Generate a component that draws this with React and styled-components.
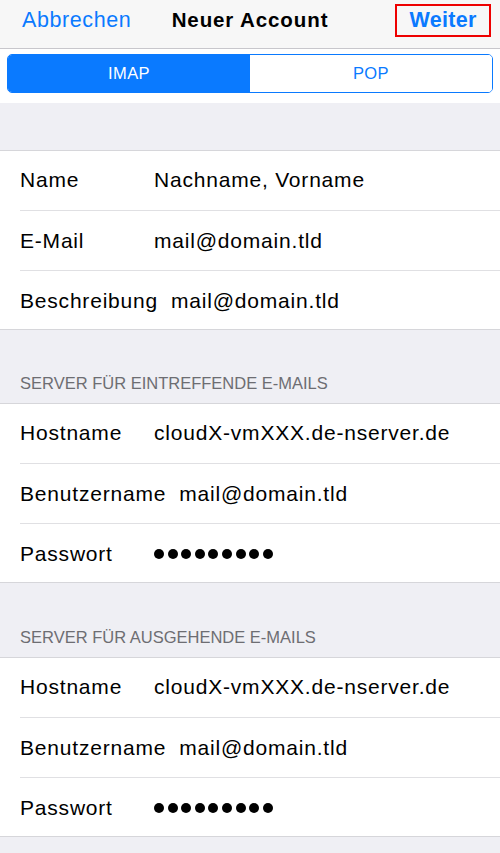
import React from 'react';
import styled, { createGlobalStyle } from 'styled-components';

const GlobalStyle = createGlobalStyle`
  html, body {
    margin: 0;
    padding: 0;
    background: #efeff4;
  }
  body {
    font-family: "Liberation Sans", Arial, sans-serif;
    -webkit-font-smoothing: antialiased;
  }
`;

const Screen = styled.div`
  width: 500px;
  min-height: 853px;
  background: #efeff4;
  color: #000;
`;

const NavBar = styled.header`
  height: 49px;
  box-sizing: border-box;
  padding-bottom: 8px;
  display: grid;
  grid-template-columns: 1fr auto 1fr;
  align-items: center;
  background: #f7f7f7;
  border-bottom: 1px solid #c8c7cc;
`;

const NavButton = styled.button`
  border: none;
  background: none;
  padding: 0;
  font: inherit;
  font-size: 21.5px;
  font-weight: ${p => (p.$strong ? 600 : 400)};
  letter-spacing: ${p => (p.$strong ? '0.3px' : '0.6px')};
  color: #0a7aff;
  cursor: pointer;
`;

const LeftSlot = styled.div`
  display: flex;
  justify-content: flex-start;
  padding-left: 22px;
`;

const RightSlot = styled.div`
  display: flex;
  justify-content: flex-end;
  padding-right: 9px;
`;

const Highlight = styled.div`
  box-sizing: border-box;
  width: 96px;
  height: 33px;
  border: 2px solid #ee0000;
  display: flex;
  align-items: center;
  justify-content: center;
`;

const Title = styled.h1`
  margin: 0;
  font-size: 20.5px;
  font-weight: 700;
  letter-spacing: 0.9px;
`;

const SegmentBar = styled.div`
  background: #fff;
  padding: 5px 7px 10px;
`;

const Segmented = styled.div`
  display: grid;
  grid-template-columns: 1fr 1fr;
  height: 39px;
  box-sizing: border-box;
  border: 1.5px solid #0a7aff;
  border-radius: 5px;
  overflow: hidden;
`;

const Segment = styled.button`
  border: none;
  margin: 0;
  font: inherit;
  font-size: 16.5px;
  letter-spacing: 0.4px;
  background: ${p => (p.$active ? '#0a7aff' : '#fff')};
  color: ${p => (p.$active ? '#fff' : '#0a7aff')};
`;

const Spacer = styled.div`
  height: 47px;
`;

const SectionHeader = styled.div`
  height: ${p => p.$height || 73}px;
  box-sizing: border-box;
  display: flex;
  align-items: flex-end;
  padding: 0 20px 10px;
  font-size: 16.5px;
  line-height: 20px;
  color: #6d6d72;
  text-transform: uppercase;
`;

/* hairlines drawn inside the box so the group stays 3 × 60px tall */
const Group = styled.div`
  background: #fff;
  box-shadow: inset 0 1px 0 #d6d6da, inset 0 -1px 0 #d6d6da;
`;

const Row = styled.div`
  height: 60px;
  box-sizing: border-box;
  margin-left: 20px;
  display: flex;
  align-items: center;
  font-size: 21px;
  letter-spacing: 0.8px;
  & + & {
    border-top: 1px solid #e0e0e3;
  }
`;

const Label = styled.span`
  min-width: 121px;
  margin-right: 13px;
  white-space: nowrap;
`;

const Value = styled.span`
  white-space: nowrap;
`;

const Dots = styled.span`
  display: flex;
  gap: 3.6px;
`;

const Dot = styled.i`
  width: 10px;
  height: 10px;
  border-radius: 50%;
  background: #000;
`;

const Masked = ({ length }) => (
  <Dots aria-label="Passwort">
    {Array.from({ length }, (_, i) => <Dot key={i} />)}
  </Dots>
);

const account = [
  { label: 'Name', value: 'Nachname, Vorname' },
  { label: 'E-Mail', value: 'mail@domain.tld' },
  { label: 'Beschreibung', value: 'mail@domain.tld' },
];

const server = [
  { label: 'Hostname', value: 'cloudX-vmXXX.de-nserver.de' },
  { label: 'Benutzername', value: 'mail@domain.tld' },
  { label: 'Passwort', secret: 9 },
];

const Fields = ({ rows }) => (
  <Group>
    {rows.map(r => (
      <Row key={r.label}>
        <Label>{r.label}</Label>
        {r.secret ? <Masked length={r.secret} /> : <Value>{r.value}</Value>}
      </Row>
    ))}
  </Group>
);

export default function App() {
  return (
    <Screen>
      <GlobalStyle />
      <NavBar>
        <LeftSlot>
          <NavButton>Abbrechen</NavButton>
        </LeftSlot>
        <Title>Neuer Account</Title>
        <RightSlot>
          <Highlight>
            <NavButton $strong>Weiter</NavButton>
          </Highlight>
        </RightSlot>
      </NavBar>

      <SegmentBar>
        <Segmented>
          <Segment $active>IMAP</Segment>
          <Segment>POP</Segment>
        </Segmented>
      </SegmentBar>

      <Spacer />
      <Fields rows={account} />

      <SectionHeader>Server für eintreffende E-Mails</SectionHeader>
      <Fields rows={server} />

      <SectionHeader $height={74}>Server für ausgehende E-Mails</SectionHeader>
      <Fields rows={server} />
    </Screen>
  );
}
